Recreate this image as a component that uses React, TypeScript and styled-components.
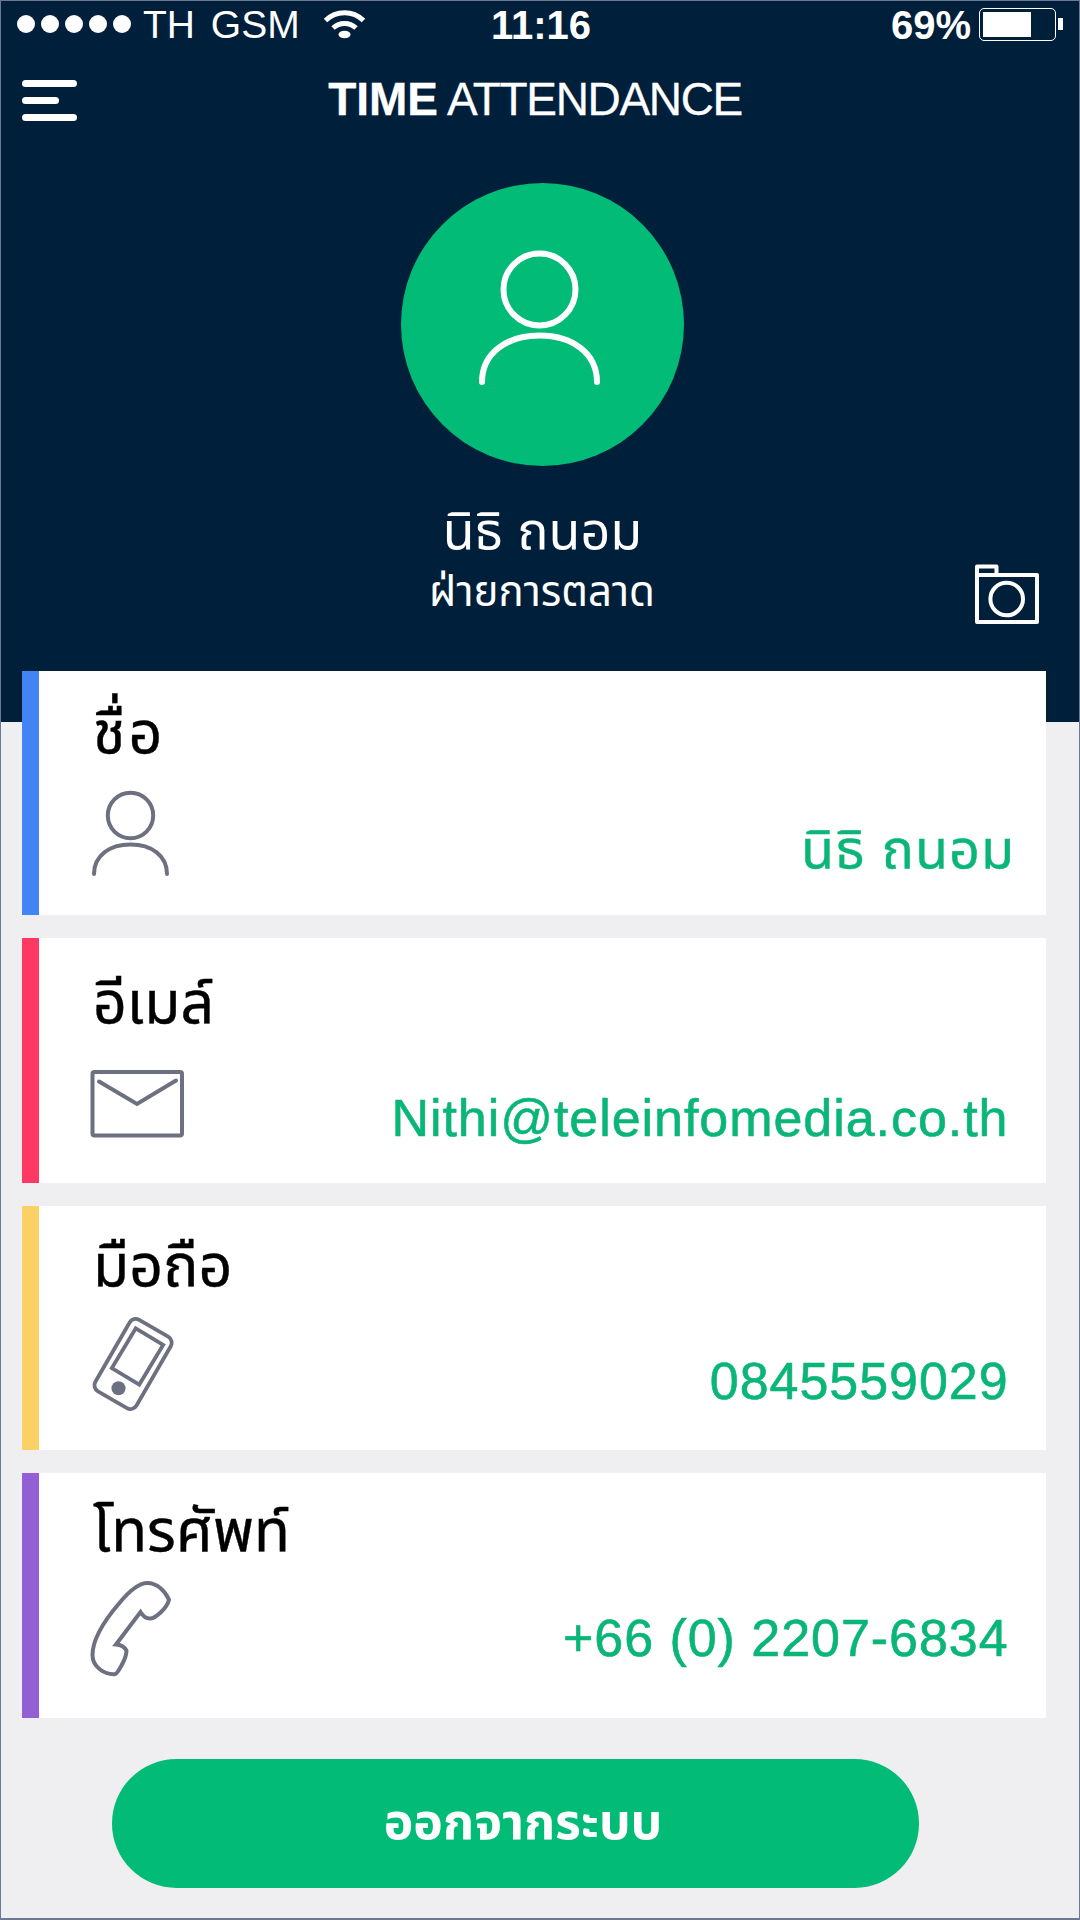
import React from 'react';
import styled, { createGlobalStyle } from 'styled-components';

const NAVY = '#001f3a';
const GREEN = '#02bb77';
const VALUE_GREEN = '#0ab578';
const ICON = '#6d7080';

const GlobalStyle = createGlobalStyle`
  * { box-sizing: border-box; }
  body { margin: 0; background: #efeff1; }
`;

const Screen = styled.div`
  width: 1080px;
  height: 1920px;
  border: 1px solid #6b7a92;
  border-bottom-width: 2px;
  background: #efeff1;
  font-family: 'Liberation Sans', 'Noto Sans Thai', 'Noto Sans', sans-serif;
  overflow: hidden;
`;

const Header = styled.header`
  height: 721px;
  background: ${NAVY};
  color: #fff;
`;

const StatusBar = styled.div`
  display: grid;
  grid-template-columns: 1fr auto 1fr;
  align-items: center;
  height: 46px;
  padding: 0 16px 0 16px;
`;

const StatusGroup = styled.div<{ $end?: boolean }>`
  display: flex;
  align-items: center;
  justify-content: ${(p) => (p.$end ? 'flex-end' : 'flex-start')};
`;

const Dots = styled.div`
  display: flex;
  gap: 6px;
  margin-right: 12px;
`;

const Dot = styled.i`
  width: 18px;
  height: 18px;
  border-radius: 50%;
  background: #fff;
`;

const StatusText = styled.span<{ $bold?: boolean }>`
  padding-top: 1px;
  font-size: ${(p) => (p.$bold ? 40 : 39)}px;
  line-height: 44px;
  font-weight: ${(p) => (p.$bold ? 700 : 400)};
  word-spacing: 5px;
  white-space: pre;
`;

const Clock = styled(StatusText)`
  padding-left: 2px;
`;

const Battery = styled.div`
  display: flex;
  align-items: center;
  gap: 2px;
  margin-left: 8px;
`;

const BatteryCase = styled.div`
  width: 77px;
  height: 33px;
  padding: 3px;
  border: 1.5px solid #fff;
  border-radius: 5px;
`;

const BatteryLevel = styled.div`
  width: 48px;
  height: 100%;
  background: #fff;
`;

const BatteryTip = styled.div`
  width: 5px;
  height: 12px;
  background: #fff;
`;

const NavBar = styled.div`
  display: grid;
  grid-template-columns: 55px 1fr 55px;
  align-items: center;
  height: 72px;
  margin-top: 12px;
  padding: 0 31px 0 21px;
`;

const MenuButton = styled.button`
  display: flex;
  flex-direction: column;
  gap: 10px;
  padding: 0;
  margin-top: 11px;
  border: 0;
  background: none;
`;

const MenuLine = styled.i<{ $width: number }>`
  width: ${(p) => p.$width}px;
  height: 7px;
  border-radius: 4px;
  background: #fff;
`;

const Title = styled.h1`
  margin: 7px 0 0;
  text-align: center;
  font-size: 46px;
  line-height: 52px;
  font-weight: 400;
  letter-spacing: -1.35px;
  -webkit-text-stroke: 0.3px #fff;
  b { letter-spacing: 0; }
`;

const Profile = styled.section`
  display: flex;
  flex-direction: column;
  align-items: center;
  padding: 52px 0 0 5px;
`;

const Avatar = styled.div`
  width: 283px;
  height: 283px;
  border-radius: 50%;
  background: ${GREEN};
`;

const Name = styled.div`
  margin-top: 34px;
  font-size: 52px;
  line-height: 63px;
`;

const RoleRow = styled.div`
  display: grid;
  grid-template-columns: 1fr auto 1fr;
  width: 100%;
  padding-right: 40px;
  padding-left: 39px;
`;

const Role = styled.div`
  grid-column: 2;
  font-size: 42px;
  line-height: 58px;
`;

const CameraButton = styled.button`
  justify-self: end;
  align-self: start;
  margin-top: 1px;
  padding: 0;
  border: 0;
  background: none;
  svg { display: block; }
`;

const CardList = styled.main`
  display: flex;
  flex-direction: column;
  gap: 23px;
  margin: -51.5px 33px 0 20.5px;
`;

const Card = styled.article<{ $accent: string }>`
  display: flex;
  height: 244.6px;
  padding-left: 51.5px;
  border-left: 17px solid ${(p) => p.$accent};
  background: #fff;
`;

const CardLead = styled.div<{ $top: number }>`
  display: flex;
  flex-direction: column;
  padding-top: ${(p) => p.$top}px;
  svg { display: block; overflow: visible; }
`;

const Label = styled.div<{ $gap: number; $tracking?: number }>`
  margin: 0 0 ${(p) => p.$gap}px 3px;
  font-size: 59px;
  line-height: 70px;
  letter-spacing: ${(p) => p.$tracking ?? 0}px;
  color: #000;
  white-space: nowrap;
  -webkit-text-stroke: 0.4px #000;
`;

const Value = styled.div<{ $top: number; $thai?: boolean }>`
  flex: 1;
  padding: ${(p) => p.$top}px ${(p) => (p.$thai ? 31 : 37.5)}px 0 0;
  text-align: right;
  font-size: ${(p) => (p.$thai ? 54 : 52)}px;
  line-height: 66px;
  letter-spacing: 0.95px;
  color: ${VALUE_GREEN};
  white-space: nowrap;
  -webkit-text-stroke: ${(p) => (p.$thai ? 0.4 : 0.6)}px ${VALUE_GREEN};
`;

const LogoutButton = styled.button`
  display: flex;
  align-items: center;
  justify-content: center;
  width: 807px;
  height: 129px;
  margin: 41px 0 0 111px;
  padding: 0 0 3px 15px;
  border: 0;
  border-radius: 65px;
  background: ${GREEN};
  color: #fff;
  font: 700 50px/66px 'Liberation Sans', 'Noto Sans Thai', 'Noto Sans', sans-serif;
`;

const WifiSvg = styled.svg`
  margin-left: 24px;
`;

const WifiIcon = () => (
  <WifiSvg width="41" height="29" viewBox="0 0 41 29" fill="none">
    <path d="M1.500 10.500a27 27 0 0 1 38 0" stroke="#fff" strokeWidth="5" />
    <path d="M9 18a17 17 0 0 1 23 0" stroke="#fff" strokeWidth="5" />
    <ellipse cx="20.500" cy="24.500" rx="6" ry="3.800" fill="#fff" />
  </WifiSvg>
);

const AvatarIcon = () => (
  <svg width="283" height="283" viewBox="0 0 283 283" fill="none" stroke="#fff" strokeWidth="6" strokeLinecap="round">
    <circle cx="138.500" cy="106.500" r="36" />
    <path d="M81 199c0-29 25-46.500 57.500-46.500s57.500 17.500 57.500 46.500" />
  </svg>
);

const CameraIcon = () => (
  <svg width="64" height="61" viewBox="0 0 64 61" fill="none" stroke="#fff" strokeWidth="4" strokeLinejoin="round">
    <path d="M2 11h60v47H2zM2 11V2.500h19.500V11" />
    <circle cx="31.700" cy="35" r="16.300" />
  </svg>
);

const PersonIcon = () => (
  <svg width="96" height="84" viewBox="0 0 96 84" fill="none" stroke={ICON} strokeWidth="4" strokeLinecap="round">
    <circle cx="40.500" cy="24.500" r="22.700" />
    <path d="M4 83c0-18.500 15.500-29.500 36.500-29.500S77 64.500 77 83" />
  </svg>
);

const MailIcon = () => (
  <svg width="96" height="70" viewBox="0 0 96 70" fill="none" stroke={ICON} strokeWidth="4" strokeLinecap="round">
    <rect x="2.500" y="3" width="89.500" height="63.500" rx="2" />
    <path d="M9 12.500L47 35l39-23.500" />
  </svg>
);

const MobileIcon = () => (
  <svg width="96" height="96" viewBox="0 0 96 96" fill="none" stroke={ICON} strokeWidth="3.800">
    <g transform="rotate(30 43 48)">
      <rect x="19.300" y="6.700" width="47.500" height="82.500" rx="7" />
    </g>
    <g transform="rotate(31 47.500 40.500)">
      <rect x="31.500" y="17.300" width="32" height="46.400" />
    </g>
    <circle cx="28.500" cy="72.300" r="7" fill={ICON} stroke="none" />
  </svg>
);

const PhoneIcon = () => (
  <svg width="96" height="96" viewBox="0 0 96 96" fill="none" stroke={ICON} strokeWidth="4">
    <path d="M79 18.700C75 10 67 2 57.500 2 50 2 40 9 29 22.500 14 40 2.500 58 2.500 74c0 12 12 19.500 22 19.200 3 0 12-16 12-23.500-1.500-3-5.500-6-10.500-6.200L50.500 31c3 5 6 6.800 10 6.500C66 37 77 27 79 18.700z" />
  </svg>
);

const fields = [
  { label: 'ชื่อ', value: 'นิธิ ถนอม', accent: '#4384f4', icon: <PersonIcon />, top: 27, gap: 23, valueTop: 145, thai: true, tracking: 3 },
  { label: 'อีเมล์', value: 'Nithi@teleinfomedia.co.th', accent: '#fc3863', icon: <MailIcon />, top: 30, gap: 31, valueTop: 147 },
  { label: 'มือถือ', value: '0845559029', accent: '#fbd065', icon: <MobileIcon />, top: 25, gap: 15, valueTop: 142 },
  { label: 'โทรศัพท์', value: '+66 (0) 2207-6834', accent: '#925fd5', icon: <PhoneIcon />, top: 23, gap: 15, valueTop: 132 },
];

export default function App() {
  return (
    <>
      <GlobalStyle />
      <Screen>
        <Header>
          <StatusBar>
            <StatusGroup>
              <Dots>
                {[0, 1, 2, 3, 4].map((n) => (
                  <Dot key={n} />
                ))}
              </Dots>
              <StatusText>TH GSM</StatusText>
              <WifiIcon />
            </StatusGroup>
            <Clock $bold>11:16</Clock>
            <StatusGroup $end>
              <StatusText $bold>69%</StatusText>
              <Battery>
                <BatteryCase>
                  <BatteryLevel />
                </BatteryCase>
                <BatteryTip />
              </Battery>
            </StatusGroup>
          </StatusBar>
          <NavBar>
            <MenuButton aria-label="Menu">
              <MenuLine $width={55} />
              <MenuLine $width={37} />
              <MenuLine $width={55} />
            </MenuButton>
            <Title>
              <b>TIME</b> ATTENDANCE
            </Title>
          </NavBar>
          <Profile>
            <Avatar>
              <AvatarIcon />
            </Avatar>
            <Name>นิธิ ถนอม</Name>
            <RoleRow>
              <Role>ฝ่ายการตลาด</Role>
              <CameraButton aria-label="Camera">
                <CameraIcon />
              </CameraButton>
            </RoleRow>
          </Profile>
        </Header>
        <CardList>
          {fields.map((f) => (
            <Card key={f.label} $accent={f.accent}>
              <CardLead $top={f.top}>
                <Label $gap={f.gap} $tracking={f.tracking}>{f.label}</Label>
                {f.icon}
              </CardLead>
              <Value $top={f.valueTop} $thai={f.thai}>{f.value}</Value>
            </Card>
          ))}
        </CardList>
        <LogoutButton>ออกจากระบบ</LogoutButton>
      </Screen>
    </>
  );
}
